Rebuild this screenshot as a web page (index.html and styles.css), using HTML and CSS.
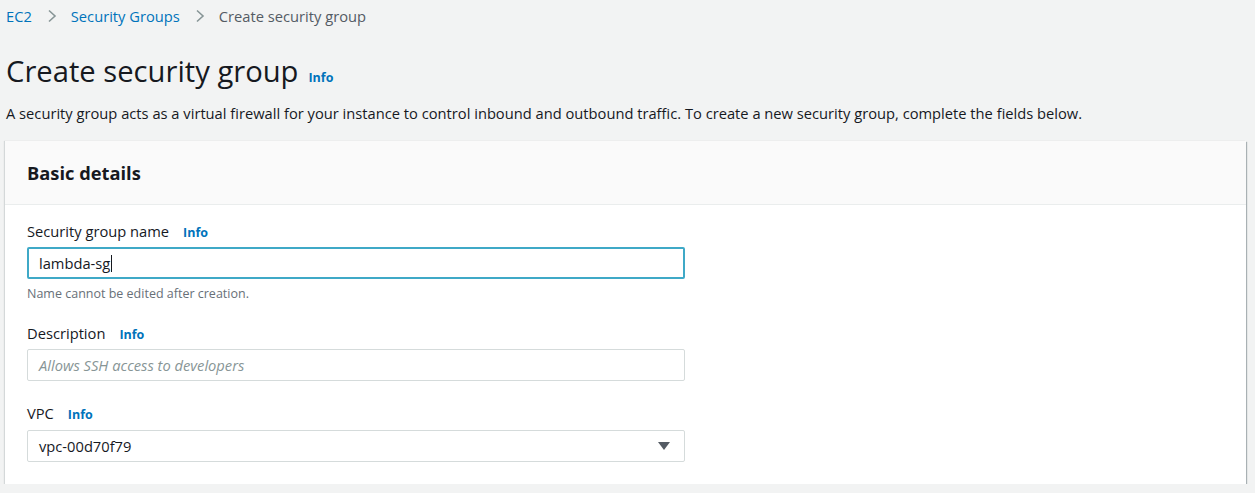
FILE: index.html
```html
<!DOCTYPE html>
<html lang="en">
<head>
<meta charset="utf-8">
<title>Create security group</title>
<link rel="stylesheet" href="styles.css">
</head>
<body>
<div class="page">
  <nav class="breadcrumb">
    <a class="crumb-link" href="#">EC2</a>
    <svg class="chev" width="10" height="14" viewBox="0 0 10 14"><path d="M2 1.5 L8 7 L2 12.5" fill="none" stroke="#879596" stroke-width="1.6"/></svg>
    <a class="crumb-link" href="#">Security Groups</a>
    <svg class="chev" width="10" height="14" viewBox="0 0 10 14"><path d="M2 1.5 L8 7 L2 12.5" fill="none" stroke="#879596" stroke-width="1.6"/></svg>
    <span class="crumb-current">Create security group</span>
  </nav>
  <header class="title-row">
    <h1 class="title">Create security group</h1>
    <a class="info info-title" href="#">Info</a>
  </header>
  <p class="intro">A security group acts as a virtual firewall for your instance to control inbound and outbound traffic. To create a new security group, complete the fields below.</p>
  <section class="card">
    <div class="card-header">
      <h2 class="card-title">Basic details</h2>
    </div>
    <div class="card-body">
      <div class="field">
        <div class="label-row"><span class="label">Security group name</span><a class="info" href="#">Info</a></div>
        <div class="input input-focus"><span class="value">lambda-sg</span><span class="caret"></span></div>
        <div class="hint">Name cannot be edited after creation.</div>
      </div>
      <div class="field">
        <div class="label-row"><span class="label">Description</span><a class="info" href="#">Info</a></div>
        <div class="input"><span class="placeholder">Allows SSH access to developers</span></div>
      </div>
      <div class="field field-vpc">
        <div class="label-row"><span class="label">VPC</span><a class="info" href="#">Info</a></div>
        <div class="input select"><span class="value">vpc-00d70f79</span>
          <svg class="tri" width="12" height="8" viewBox="0 0 12 8"><path d="M0 0 H12 L6 8 Z" fill="#545b64"/></svg>
        </div>
      </div>
    </div>
  </section>
</div>
</body>
</html>
```

FILE: styles.css
```css
* { box-sizing: border-box; }
html, body { margin: 0; padding: 0; }
body {
  background: #f2f3f3;
  font-family: "Open Sans", "Noto Sans", sans-serif;
  color: #16191f;
  font-size: 14.7px;
}
.page {
  padding: 0 9px 0 5px;
}
.breadcrumb {
  display: flex;
  align-items: center;
  height: 31px;
  padding-left: 1px;
  font-size: 14.7px;
}
.crumb-link {
  color: #0073bb;
  text-decoration: none;
}
.chev { margin: 0 14px 0 15px; }
.crumb-current { color: #545b64; }
.title-row {
  display: flex;
  align-items: baseline;
  margin-top: 22px;
  padding-left: 1px;
}
.title {
  margin: 0;
  font-size: 29.2px;
  font-weight: 400;
  line-height: 36px;
}
.info {
  color: #0073bb;
  font-weight: 700;
  font-size: 12.5px;
  text-decoration: none;
}
.info-title { margin-left: 10px; }
.intro {
  margin: 13px 0 0 1px;
  line-height: 22px;
  font-size: 14.7px;
}
.card {
  margin-top: 17px;
  background: #fff;
  box-shadow: 1px 1px 1px 0 rgba(0,28,36,0.3), -1px 0 1px 0 rgba(0,28,36,0.12);
}
.card-header {
  background: #fafafa;
  border-bottom: 1px solid #eaeded;
  height: 64px;
  display: flex;
  align-items: center;
  padding-left: 22px;
}
.card-title {
  margin: 0;
  font-size: 18.3px;
  font-weight: 700;
}
.card-body {
  padding: 16px 22px 22px;
}
.field + .field { margin-top: 21px; }
.field-vpc { margin-top: 22px !important; }
.field-vpc .label-row { margin-bottom: 5px; }
.label-row {
  display: flex;
  align-items: baseline;
  height: 22px;
  margin-bottom: 4px;
}
.label { font-size: 14.7px; }
.label-row .info { margin-left: 14px; }
.input {
  width: 658px;
  height: 32px;
  border: 1px solid #d5dbdb;
  border-radius: 2px;
  background: #fff;
  display: flex;
  align-items: center;
  padding: 0 11px;
  font-size: 14.7px;
}
.input-focus {
  border: 2px solid #3fa9c7;
  padding-left: 10px;
}
.caret {
  display: inline-block;
  width: 1px;
  height: 17px;
  background: #16191f;
  margin-left: 1px;
}
.placeholder {
  color: #879596;
  font-style: italic;
}
.select { justify-content: space-between; }
.tri { margin-right: 3px; }
.hint {
  margin-top: 7px;
  font-size: 12.5px;
  color: #687078;
  line-height: 16px;
}
```
